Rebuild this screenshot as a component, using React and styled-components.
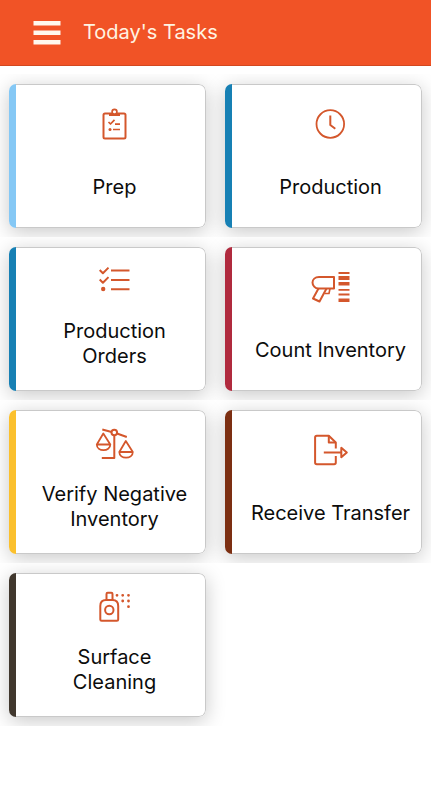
import styled, { createGlobalStyle } from "styled-components";

const GlobalStyle = createGlobalStyle`
  * {
    box-sizing: border-box;
  }
  body {
    margin: 0;
    background: #fff;
    font-family: Inter, "Liberation Sans", sans-serif;
    font-weight: 400;
  }
`;

const Header = styled.header`
  display: flex;
  align-items: center;
  gap: 21px;
  height: 66px;
  padding: 0 32px;
  background: #f15326;
  border-bottom: 1px solid #d2481f;
`;

const MenuButton = styled.button`
  display: flex;
  padding: 0;
  border: none;
  background: none;
  color: #fff8ee;
  cursor: pointer;
`;

const Title = styled.h1`
  margin: 0;
  color: #fff3e2;
  font-size: 20px;
  font-weight: 400;
  line-height: 25px;
`;

const TaskList = styled.main`
  padding-top: 8px;
`;

const TaskRow = styled.div`
  display: grid;
  grid-template-columns: 1fr 1fr;
  gap: 19px;
  padding: 10px 9px 9px;
  overflow: hidden;
`;

const Card = styled.button`
  display: flex;
  height: 144px;
  padding: 0;
  border: none;
  border-radius: 7px;
  background: #fff;
  box-shadow: 0 4px 20px rgba(0, 0, 0, 0.22);
  color: #0c0c0c;
  font: inherit;
  overflow: hidden;
  cursor: pointer;
`;

const Accent = styled.span`
  flex: 0 0 7px;
  align-self: stretch;
  background: ${({ $color }) => $color};
`;

const CardBody = styled.span`
  flex: 1;
  align-self: stretch;
  display: flex;
  flex-direction: column;
  align-items: center;
  justify-content: space-around;
  padding: 6px 10px 10px 18px;
  border: 1px solid #c9c9c9;
  border-left: none;
  border-radius: 0 7px 7px 0;
`;

const Label = styled.span`
  font-size: 20px;
  line-height: 25px;
  text-align: center;
`;

const Icon = styled.svg`
  display: block;
  height: 32px;
  fill: none;
  stroke: #d4572c;
  stroke-width: 2;
  stroke-linejoin: round;

  .solid {
    fill: #d4572c;
    stroke: none;
  }
`;

const ClipboardIcon = () => (
  <Icon width="32" viewBox="0 0 32 32">
    <rect x="4.5" y="5.5" width="22" height="25" rx="1.5" />
    <path d="M10 5h11v3H10z" className="solid" />
    <circle cx="15.5" cy="3.8" r="2.4" fill="#fff" strokeWidth="1.7" />
    <path d="M9.5 14l2 2 4-4.2M16 16.2h5M14 21.5h7" strokeWidth="1.7" />
    <circle cx="11" cy="21.5" r="1.5" className="solid" />
  </Icon>
);

const ClockIcon = () => (
  <Icon width="32" viewBox="0 0 32 32">
    <circle cx="15.3" cy="16" r="13.8" strokeWidth="1.8" />
    <path d="M15.3 7.5V17l5 3.8" />
  </Icon>
);

const ChecklistIcon = () => (
  <Icon width="32" viewBox="0 0 32 32">
    <path d="M.7 5l3.2 3.2 5.6-5.6M.7 14.5l3.2 3.2 5.6-5.6M12 5.500h18.500M12 15h18.500M12 24.300h18.500" />
    <circle cx="4.2" cy="24" r="2.2" className="solid" />
  </Icon>
);

const ScannerIcon = () => (
  <Icon width="40" viewBox="0 0 40 32">
    <path d="M23 6H8C4 6 1.500 8.500 1.500 11.500S4 17.500 7.500 17.500H23z" />
    <path d="M7.500 17.500l-5.500 10 6.500 3 7-13" />
    <path d="M13.500 22.500H18l1-5" strokeWidth="1.6" />
    <path
      d="M27.500 1h11v2h-11zM27.500 5h11v4h-11zM27.500 11h11v3.500h-11zM27.500 18h11v1.700h-11zM27.500 22.500h11v2h-11zM27.500 27.500h11V31h-11z"
      className="solid"
    />
  </Icon>
);

const ScalesIcon = () => (
  <Icon width="40" viewBox="0 0 40 32">
    <circle cx="19.3" cy="4.5" r="2.8" />
    <path d="M7.3 1.5L16.600 4M22 5.500L31.800 9M19.300 7.500V30H6.800" />
    <path d="M8.300 5.500l-6.500 11c0 7.500 13.500 7.500 13.500 0zM1.800 16.500h13.500" strokeWidth="1.8" />
    <path d="M30.800 13l-6.500 11c0 7.500 13.500 7.500 13.500 0zM24.300 24h13.500" strokeWidth="1.8" />
  </Icon>
);

const TransferIcon = () => (
  <Icon width="36" viewBox="0 0 36 32">
    <path d="M22.800 14.500V8.500L15.800 1.800h-12c-1.200 0-1.700.5-1.700 1.700v25c0 1.200.5 1.700 1.700 1.700h17.300c1.200 0 1.700-.5 1.700-1.700V22" />
    <path d="M15.800 1.800v6.700h7M10.800 18.500h17.500" />
    <path d="M28.300 13.800v9.400l5.500-4.700z" />
  </Icon>
);

const SprayIcon = () => (
  <Icon width="32" viewBox="0 0 32 32">
    <path d="M7.500 9V3c0-.8.4-1.200 1.200-1.200h3.600c.8 0 1.200.4 1.200 1.200v6" />
    <path d="M1.300 28.500V15c0-4 2.200-6 5.700-6h6.500c3.500 0 5.700 2 5.700 6v13.500c0 .9-.4 1.300-1.300 1.300H2.600c-.9 0-1.300-.4-1.300-1.300z" />
    <circle cx="10.300" cy="19" r="4.200" />
    <path
      d="M18 4.300h0M23.700 4.300h0M29.500 4.300h0M23.700 10h0M29.500 10h0M29.500 15.700h0"
      strokeWidth="2.8"
      strokeLinecap="round"
    />
  </Icon>
);

const MenuIcon = () => (
  <svg width="30" height="30" viewBox="0 0 30 30" fill="currentColor" aria-hidden="true">
    <path d="M1.5 3h27v4.500h-27zM1.5 12.500h27V17h-27zM1.5 22h27v4.500h-27z" />
  </svg>
);

const rows = [
  [
    { name: "Prep", color: "#85c8f5", icon: ClipboardIcon },
    { name: "Production", color: "#1780b4", icon: ClockIcon },
  ],
  [
    { name: "Production Orders", color: "#1780b4", icon: ChecklistIcon },
    { name: "Count Inventory", color: "#b02a3e", icon: ScannerIcon },
  ],
  [
    { name: "Verify Negative Inventory", color: "#fbc02d", icon: ScalesIcon },
    { name: "Receive Transfer", color: "#7c2f12", icon: TransferIcon },
  ],
  [{ name: "Surface Cleaning", color: "#41382e", icon: SprayIcon }],
];

const TaskCard = ({ task }) => {
  const TaskIcon = task.icon;
  return (
    <Card type="button">
      <Accent $color={task.color} />
      <CardBody>
        <TaskIcon />
        <Label>{task.name}</Label>
      </CardBody>
    </Card>
  );
};

const App = () => {
  return (
    <>
      <GlobalStyle />
      <Header>
        <MenuButton type="button" aria-label="Menu">
          <MenuIcon />
        </MenuButton>
        <Title>Today's Tasks</Title>
      </Header>
      <TaskList>
        {rows.map((row) => (
          <TaskRow key={row[0].name}>
            {row.map((task) => (
              <TaskCard key={task.name} task={task} />
            ))}
          </TaskRow>
        ))}
      </TaskList>
    </>
  );
};

export default App;
